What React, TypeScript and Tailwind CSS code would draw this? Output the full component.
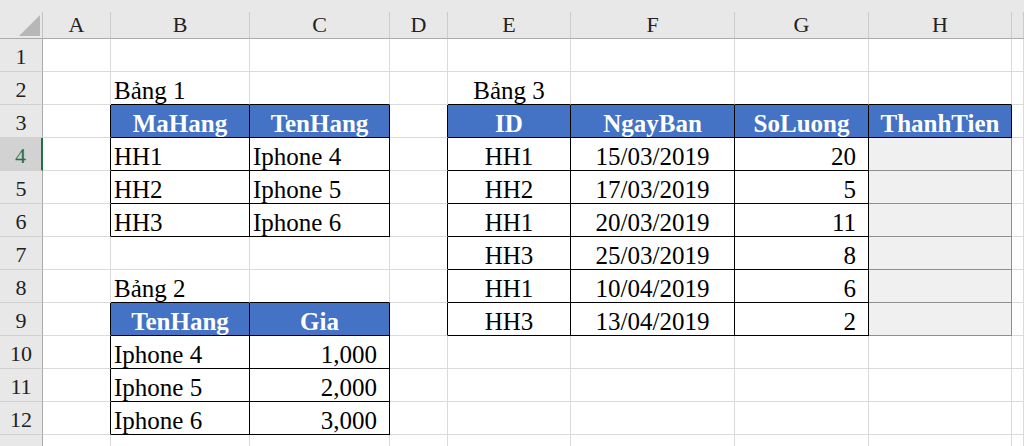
type Align = "left" | "center" | "right";
type Cell = { text?: string; align?: Align; head?: boolean; fill?: boolean };
type Line = "grid" | "black" | "gray";

const COLS = ["A", "B", "C", "D", "E", "F", "G", "H", ""];
const ROW_COUNT = 13;
const SELECTED_ROW = 4;

const cells: Record<string, Cell> = {
  B2: { text: "Bảng 1" },
  B3: { text: "MaHang", head: true },
  C3: { text: "TenHang", head: true },
  B4: { text: "HH1" },
  C4: { text: "Iphone 4" },
  B5: { text: "HH2" },
  C5: { text: "Iphone 5" },
  B6: { text: "HH3" },
  C6: { text: "Iphone 6" },
  B8: { text: "Bảng 2" },
  B9: { text: "TenHang", head: true },
  C9: { text: "Gia", head: true },
  B10: { text: "Iphone 4" },
  C10: { text: "1,000", align: "right" },
  B11: { text: "Iphone 5" },
  C11: { text: "2,000", align: "right" },
  B12: { text: "Iphone 6" },
  C12: { text: "3,000", align: "right" },
  E2: { text: "Bảng 3", align: "center" },
  E3: { text: "ID", head: true },
  F3: { text: "NgayBan", head: true },
  G3: { text: "SoLuong", head: true },
  H3: { text: "ThanhTien", head: true },
};

const sales = [
  ["HH1", "15/03/2019", "20"],
  ["HH2", "17/03/2019", "5"],
  ["HH1", "20/03/2019", "11"],
  ["HH3", "25/03/2019", "8"],
  ["HH1", "10/04/2019", "6"],
  ["HH3", "13/04/2019", "2"],
];
sales.forEach(([id, date, qty], i) => {
  const r = i + 4;
  cells[`E${r}`] = { text: id, align: "center" };
  cells[`F${r}`] = { text: date, align: "center" };
  cells[`G${r}`] = { text: qty, align: "right" };
  cells[`H${r}`] = { fill: true };
});

// bordered ranges, column index 0 = A
const tables = [
  { r1: 3, c1: 1, r2: 6, c2: 2 },
  { r1: 9, c1: 1, r2: 12, c2: 2 },
  { r1: 3, c1: 4, r2: 9, c2: 7 },
];

const inTable = (r: number, c: number) =>
  tables.some((t) => r >= t.r1 && r <= t.r2 && c >= t.c1 && c <= t.c2);

const isGrayBox = (r: number, c: number) => c === 7 && r >= 4 && r <= 9;

function rightLine(r: number, c: number): Line {
  if (isGrayBox(r, c)) return "gray";
  if (inTable(r, c) || inTable(r, c + 1)) return "black";
  return "grid";
}

function bottomLine(r: number, c: number): Line {
  if (isGrayBox(r, c)) return "gray";
  if (inTable(r, c) || inTable(r + 1, c)) return "black";
  return "grid";
}

const rightClass: Record<Line, string> = {
  grid: "border-r-[#dadada]",
  black: "border-r-black",
  gray: "border-r-[#8e8e8e]",
};
const bottomClass: Record<Line, string> = {
  grid: "border-b-[#dadada]",
  black: "border-b-black",
  gray: "border-b-[#8e8e8e]",
};
const alignClass: Record<Align, string> = {
  left: "justify-start pl-[3px]",
  center: "justify-center",
  right: "justify-end pr-[12px]",
};

function SheetCell({ r, c }: { r: number; c: number }) {
  const cell = cells[`${COLS[c]}${r}`] ?? {};
  const align: Align = cell.head ? "center" : cell.align ?? "left";
  const bg = cell.head ? "bg-[#4472c4] text-white font-bold" : cell.fill ? "bg-[#f0f0f0] text-black" : "bg-white text-black";
  return (
    <div
      className={`flex items-end overflow-hidden whitespace-nowrap border-r border-b text-[25px] leading-[26px] ${rightClass[rightLine(r, c)]} ${bottomClass[bottomLine(r, c)]} ${alignClass[align]} ${bg}`}
    >
      {cell.text}
    </div>
  );
}

function RowHeader({ r }: { r: number }) {
  const selected = r === SELECTED_ROW;
  return (
    <div
      className={`flex items-end justify-center border-b border-b-[#d0d0d0] pb-[2px] text-[22px] leading-[24px] ${
        selected
          ? "border-r-2 border-r-[#217346] bg-[#d2d2d2] text-[#217346]"
          : "border-r border-r-[#ababab] bg-[#e8e8e8] text-[#222]"
      }`}
    >
      {r}
    </div>
  );
}

export default function App() {
  const rows = Array.from({ length: ROW_COUNT }, (_, i) => i + 1);
  return (
    <div className="h-[446px] w-[1024px] overflow-hidden bg-white font-['Liberation_Serif',serif]">
      <div className="grid grid-cols-[43px_68px_139px_140px_58px_123px_164px_134px_143px_1fr] grid-rows-[12px_27px_repeat(13,33px)]">
        <div className="col-span-full bg-[#e8e8e8]" />

        {/* select-all corner */}
        <div className="flex items-end justify-end border-r border-b border-r-[#c4c4c4] border-b-[#ababab] bg-[#e8e8e8] pr-[2px] pb-[2px]">
          <svg width="21" height="21" viewBox="0 0 21 21">
            <polygon points="21,0 21,21 0,21" fill="#b7b7b7" />
          </svg>
        </div>

        {COLS.map((col, i) => (
          <div
            key={i}
            className="flex items-end justify-center border-r border-b border-r-[#cccccc] border-b-[#ababab] bg-[#e8e8e8] pb-[1px] text-[22px] leading-[24px] text-[#222]"
          >
            {col}
          </div>
        ))}

        {rows.map((r) => (
          <div key={r} className="contents">
            <RowHeader r={r} />
            {COLS.map((_, c) => (
              <SheetCell key={c} r={r} c={c} />
            ))}
          </div>
        ))}
      </div>
    </div>
  );
}
